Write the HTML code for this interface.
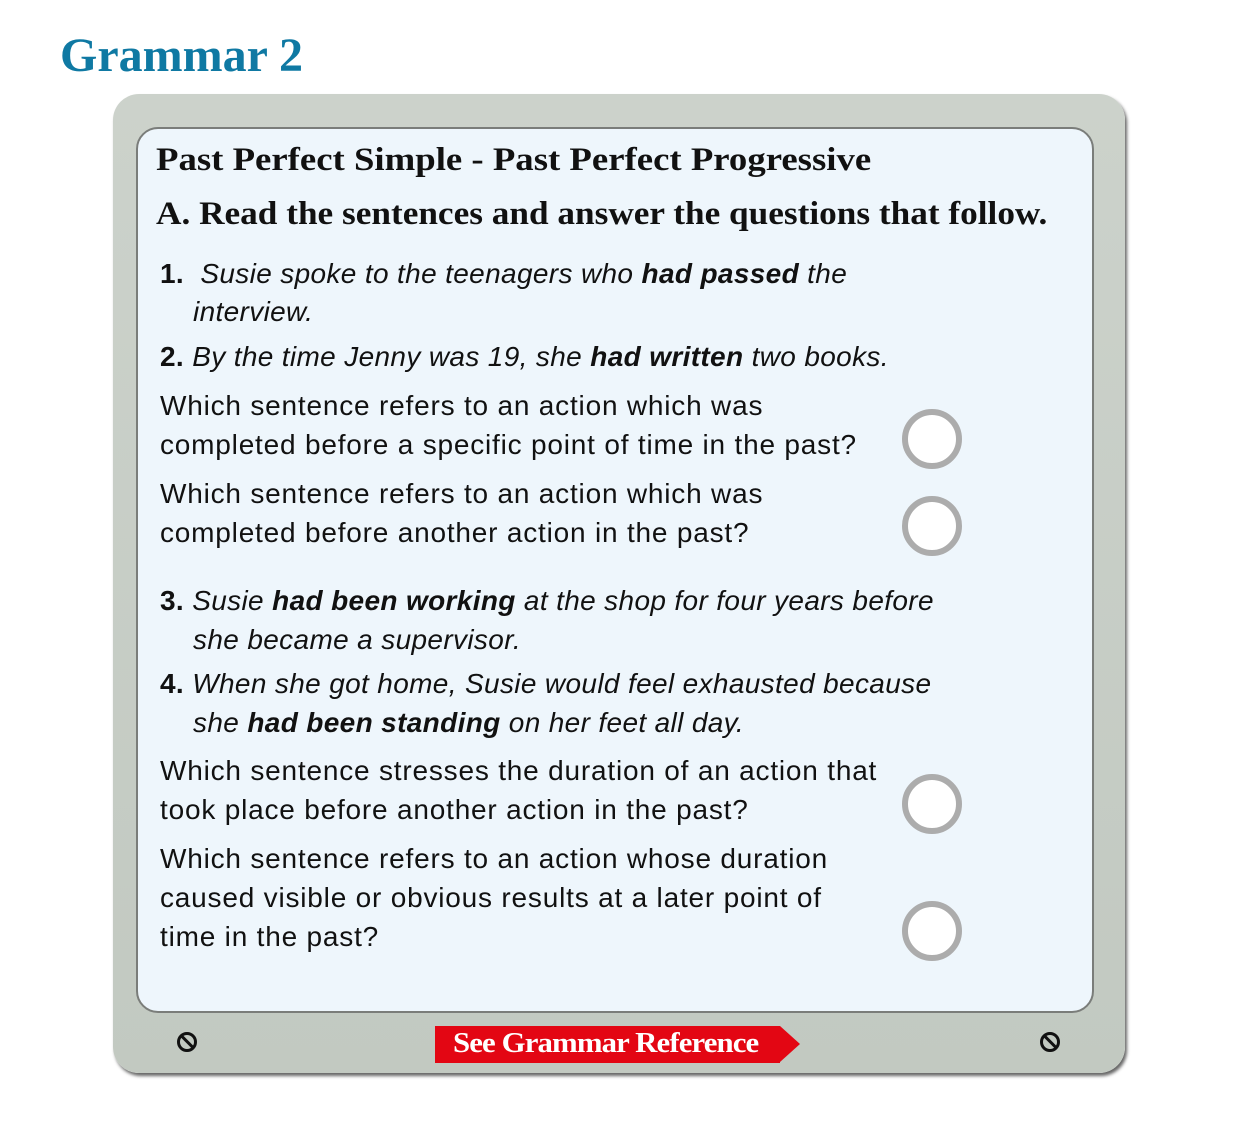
<!DOCTYPE html>
<html><head><meta charset="utf-8"><style>
body{margin:0;width:1235px;height:1130px;background:#fff;position:relative;overflow:hidden;font-family:"Liberation Sans",sans-serif;}
.h{position:absolute;left:60px;top:28px;font-family:"Liberation Serif",serif;font-weight:bold;font-size:48px;color:#0f79a3;}
.frame{position:absolute;left:113px;top:94px;width:1012px;height:979px;border-radius:26px;background:linear-gradient(#ccd2cb,#c2c9c1);box-shadow:2px 3px 3px #666;}
.panel{position:absolute;left:136px;top:127px;width:954px;height:882px;border:2px solid #7a7d7a;border-radius:22px;background:#eef6fc;}
.t{position:absolute;white-space:nowrap;color:#111;transform-origin:left center;}
.s{font-family:"Liberation Serif",serif;font-weight:bold;font-size:33px;}
.b{font-size:28px;letter-spacing:0.8px;}
.i{font-size:28px;font-style:italic;letter-spacing:0.35px;}
.n{font-style:normal;font-weight:bold;}
.c{position:absolute;width:48px;height:48px;border:6px solid #acacac;border-radius:50%;background:#fff;}
.screw{position:absolute;width:14px;height:14px;border:3px solid #111;border-radius:50%;}
.screw:after{content:"";position:absolute;left:6px;top:-1px;width:3px;height:16px;background:#111;transform:rotate(-45deg);}
.btn{position:absolute;left:435px;top:1026px;width:345px;height:37px;background:#e30613;}
.arr{position:absolute;left:780px;top:1026px;width:0;height:0;border-top:18.5px solid transparent;border-bottom:18.5px solid transparent;border-left:20px solid #e30613;}
.bt{position:absolute;left:453px;top:1028px;color:#fff;font-family:"Liberation Serif",serif;font-weight:bold;font-size:28px;letter-spacing:-0.8px;transform:scaleX(1.1);transform-origin:left center;white-space:nowrap;}
</style></head><body>
<div class="h">Grammar 2</div>
<div class="frame"></div>
<div class="panel"></div>
<div class="t s" style="left:156px;top:142px;transform:scaleX(1.114)">Past Perfect Simple - Past Perfect Progressive</div>
<div class="t s" style="left:156px;top:196px;transform:scaleX(1.068)">A. Read the sentences and answer the questions that follow.</div>
<div class="t i" style="left:160px;top:258px"><span class="n">1.</span>&nbsp; Susie spoke to the teenagers who <b>had passed</b> the</div>
<div class="t i" style="left:193px;top:296px">interview.</div>
<div class="t i" style="left:160px;top:341px"><span class="n">2.</span> By the time Jenny was 19, she <b>had written</b> two books.</div>
<div class="t b" style="left:160px;top:390px">Which sentence refers to an action which was</div>
<div class="t b" style="left:160px;top:429px">completed before a specific point of time in the past?</div>
<div class="t b" style="left:160px;top:478px">Which sentence refers to an action which was</div>
<div class="t b" style="left:160px;top:517px">completed before another action in the past?</div>
<div class="t i" style="left:160px;top:585px"><span class="n">3.</span> Susie <b>had been working</b> at the shop for four years before</div>
<div class="t i" style="left:193px;top:624px">she became a supervisor.</div>
<div class="t i" style="left:160px;top:668px"><span class="n">4.</span> When she got home, Susie would feel exhausted because</div>
<div class="t i" style="left:193px;top:707px">she <b>had been standing</b> on her feet all day.</div>
<div class="t b" style="left:160px;top:755px">Which sentence stresses the duration of an action that</div>
<div class="t b" style="left:160px;top:794px">took place before another action in the past?</div>
<div class="t b" style="left:160px;top:843px">Which sentence refers to an action whose duration</div>
<div class="t b" style="left:160px;top:882px">caused visible or obvious results at a later point of</div>
<div class="t b" style="left:160px;top:921px">time in the past?</div>
<div class="c" style="left:902px;top:409px"></div>
<div class="c" style="left:902px;top:496px"></div>
<div class="c" style="left:902px;top:774px"></div>
<div class="c" style="left:902px;top:901px"></div>
<div class="screw" style="left:177px;top:1032px"></div>
<div class="screw" style="left:1040px;top:1032px"></div>
<div class="btn"></div><div class="arr"></div>
<div class="bt">See Grammar Reference</div>
</body></html>
